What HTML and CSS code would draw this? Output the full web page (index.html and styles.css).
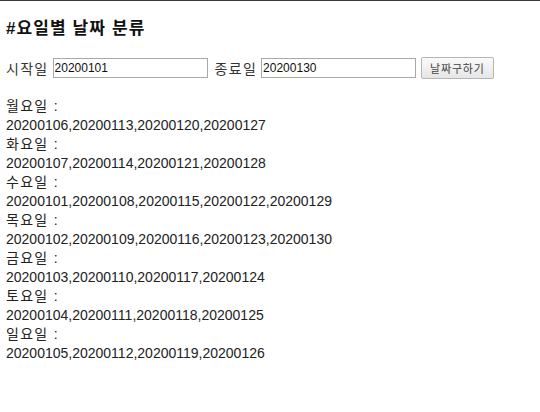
FILE: index.html
```html
<!DOCTYPE html>
<html lang="ko">
<head>
    <meta charset="UTF-8">
    <title>요일별 날짜 분류</title>
    <link rel="stylesheet" href="styles.css">
</head>
<body class="page">
<div class="root">
    <h3 class="title">#요일별 날짜 분류</h3>
    <div class="input">
        <span>시작일</span>
        <input id="startDate" value="20200101"/>
        <span>종료일</span>
        <input id="endDate" value="20200130"/>
        <button id="calc">날짜구하기</button>
    </div>
    <div class="result" id="result">
        <div class="day">월요일 :</div>
        <div class="dates">20200106,20200113,20200120,20200127</div>
        <div class="day">화요일 :</div>
        <div class="dates">20200107,20200114,20200121,20200128</div>
        <div class="day">수요일 :</div>
        <div class="dates">20200101,20200108,20200115,20200122,20200129</div>
        <div class="day">목요일 :</div>
        <div class="dates">20200102,20200109,20200116,20200123,20200130</div>
        <div class="day">금요일 :</div>
        <div class="dates">20200103,20200110,20200117,20200124</div>
        <div class="day">토요일 :</div>
        <div class="dates">20200104,20200111,20200118,20200125</div>
        <div class="day">일요일 :</div>
        <div class="dates">20200105,20200112,20200119,20200126</div>
    </div>
</div>
</body>
</html>
```

FILE: styles.css
```css
.page {
    margin: 0;
    border-top: 1px solid #3a3a3a;
    background: #fff;
    color: #222;
    font-family: "Liberation Sans", "Noto Sans CJK KR", sans-serif;
}

.root {
    padding: 0 6px;
}

.title {
    margin: 17px 0 0 0;
    font-size: 17px;
    line-height: 22px;
    letter-spacing: 1.1px;
    font-weight: bold;
    color: #111;
}

.input {
    display: flex;
    align-items: center;
    margin-top: 17px;
    font-size: 14px;
    color: #333;
}

.input span {
    margin-right: 4px;
    letter-spacing: 1.3px;
}

.input input {
    width: 151px;
    height: 16px;
    padding: 1px 1px;
    margin: 0 7px 0 0;
    border: 1px solid #a9a9a9;
    font-family: "Liberation Sans", sans-serif;
    font-size: 12px;
    color: #111;
}

.input button {
    height: 22px;
    padding: 0 8px;
    margin-left: -2px;
    border: 1px solid #b5b5b5;
    border-radius: 2px;
    background: linear-gradient(#fafafa, #e6e6e6);
    font-family: "Liberation Sans", "Noto Sans CJK KR", sans-serif;
    font-size: 11px;
    letter-spacing: 0.8px;
    color: #444;
}

.result {
    margin-top: 18px;
    font-size: 14px;
    line-height: 19px;
    color: #222;
}

.day {
    letter-spacing: 1.3px;
}
```
